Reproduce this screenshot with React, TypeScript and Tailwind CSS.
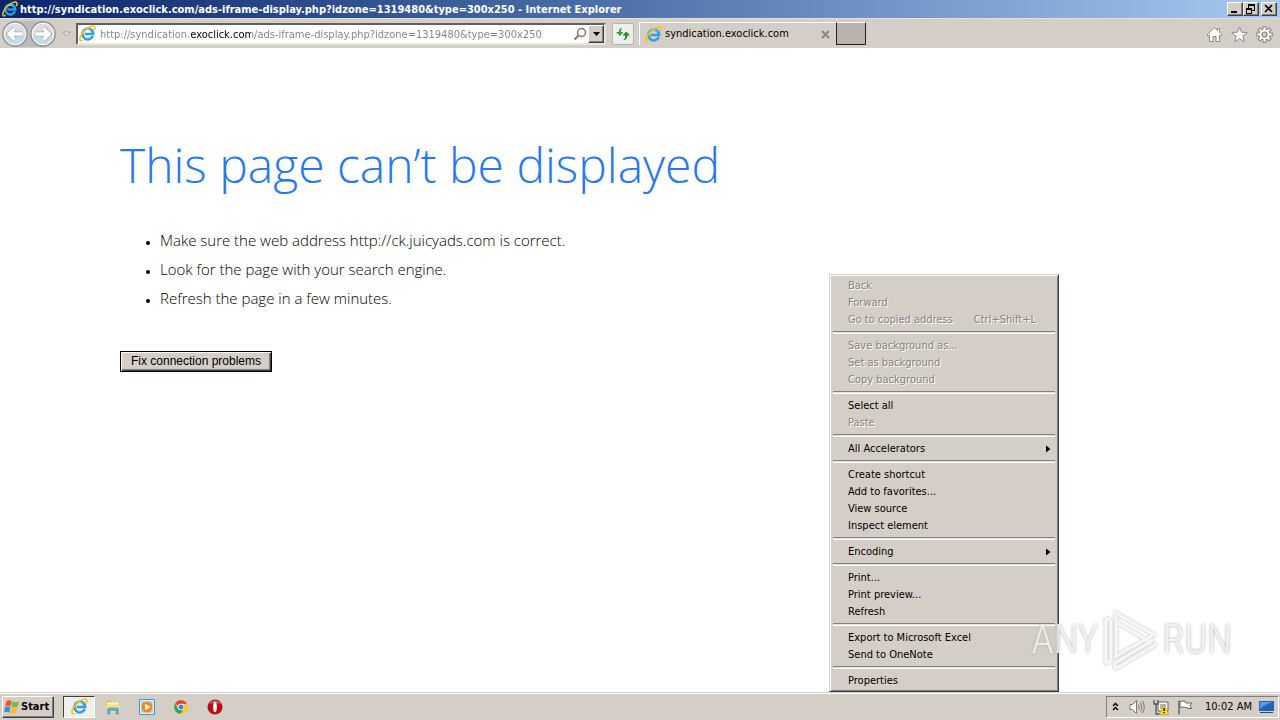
import type { ReactNode } from "react";
import clsx from "clsx";

type MenuEntry = { label: string; shortcut?: string; disabled?: boolean; submenu?: boolean };

const MENU: MenuEntry[][] = [
  [
    { label: "Back", disabled: true },
    { label: "Forward", disabled: true },
    { label: "Go to copied address", shortcut: "Ctrl+Shift+L", disabled: true },
  ],
  [
    { label: "Save background as...", disabled: true },
    { label: "Set as background", disabled: true },
    { label: "Copy background", disabled: true },
  ],
  [{ label: "Select all" }, { label: "Paste", disabled: true }],
  [{ label: "All Accelerators", submenu: true }],
  [
    { label: "Create shortcut" },
    { label: "Add to favorites..." },
    { label: "View source" },
    { label: "Inspect element" },
  ],
  [{ label: "Encoding", submenu: true }],
  [{ label: "Print..." }, { label: "Print preview..." }, { label: "Refresh" }],
  [{ label: "Export to Microsoft Excel" }, { label: "Send to OneNote" }],
  [{ label: "Properties" }],
];

const TIPS = [
  "Make sure the web address http://ck.juicyads.com is correct.",
  "Look for the page with your search engine.",
  "Refresh the page in a few minutes.",
];

const raised =
  "border border-t-white border-l-white border-r-[#404040] border-b-[#404040] shadow-[inset_-1px_-1px_0_#808080]";

function IeLogo({ className }: { className?: string }) {
  return (
    <svg viewBox="0 0 18 18" className={className} aria-hidden="true">
      <path d="M14.6 11.7A5.7 5.7 0 1 1 15 9.6H6" fill="none" stroke="#2b9fe0" strokeWidth="2.7" />
      <path d="M4.6 7.2A5.6 5.6 0 0 1 13 6" fill="none" stroke="#8bd6fa" strokeWidth="1" />
      <path
        d="M3.4 16.4C.5 17.5 0 14.6 2.4 10.6 5.4 5.4 11.8.6 15.4 1.1c1.9.3 1.7 2.3.9 4.2"
        fill="none"
        stroke="#f2c21c"
        strokeWidth="1.7"
        strokeLinecap="round"
      />
    </svg>
  );
}

function NavArrow({ back }: { back?: boolean }) {
  const arrow = back ? "M20 13H7M12.5 7.5 7 13l5.5 5.5" : "M6 13h13M13.5 7.5 19 13l-5.5 5.5";
  return (
    <svg viewBox="0 0 26 26" className="size-[26px]" aria-hidden="true">
      <circle cx="13" cy="13" r="12" fill="#dcdee1" stroke="#8e9296" strokeWidth="1.4" />
      <path d="M2 13a11 11 0 0 0 22 0c-6 3-16 3-22 0Z" fill="#c3dce8" />
      <circle cx="13" cy="13" r="10.8" fill="none" stroke="#fff" strokeWidth="1" />
      <path d={arrow} fill="none" stroke="#a3a9ad" strokeWidth="5" />
      <path d={arrow} fill="none" stroke="#fff" strokeWidth="3.4" />
    </svg>
  );
}

function WindowButton({ label, children }: { label: string; children: ReactNode }) {
  return (
    <button aria-label={label} className={clsx("flex h-[14px] w-4 items-center justify-center bg-[#d5cec7]", raised)}>
      <svg viewBox="0 0 12 10" className="h-[10px] w-3" fill="none" stroke="#000" shapeRendering="crispEdges">
        {children}
      </svg>
    </button>
  );
}

function TitleBar() {
  return (
    <header className="flex h-[18px] items-center bg-linear-to-r from-[#0a246a] to-[#a6caf0] pr-[3px] pl-0.5">
      <IeLogo className="size-4" />
      <h1 className="ml-0.5 grow truncate pt-px text-[11px] leading-4 font-bold text-white">
        http://syndication.exoclick.com/ads-iframe-display.php?idzone=1319480&amp;type=300x250 - Internet Explorer
      </h1>
      <WindowButton label="Minimize">
        <path d="M2 8h6" strokeWidth="2" />
      </WindowButton>
      <WindowButton label="Restore">
        <path d="M3 1h7M1 5h6" strokeWidth="2" />
        <path d="M3.5 2v2M9.5 2v5M7 6.5h3M1.5 6v4M6.5 6v4M1 9.5h6" />
      </WindowButton>
      <div className="ml-0.5 flex">
        <WindowButton label="Close">
          <path d="M2 1l7 7M9 1l-7 7" strokeWidth="1.7" shapeRendering="auto" />
        </WindowButton>
      </div>
    </header>
  );
}

function Toolbar() {
  return (
    <div className="flex h-[30px] items-center border-t border-[#e4dfd8] bg-[#d5cec7] pl-[2px] text-[11px]">
      <nav className="flex items-center gap-[2px] rounded-full bg-[#bdbbb9]">
        <button aria-label="Back">
          <NavArrow back />
        </button>
        <button aria-label="Forward">
          <NavArrow />
        </button>
      </nav>
      <button aria-label="Recent pages" className="mx-1 flex w-3 justify-center">
        <svg viewBox="0 0 9 6" className="h-[6px] w-[9px]">
          <path d="M1 1h7L4.5 5Z" fill="#eee" stroke="#a09c98" />
        </svg>
      </button>
      <form
        onSubmit={(e) => e.preventDefault()}
        className="flex h-[22px] w-[530px] items-center border-2 border-t-[#606060] border-r-[#e8e4e0] border-b-[#e8e4e0] border-l-[#606060] bg-white"
      >
        <IeLogo className="ml-px size-[17px] shrink-0" />
        {/* host name is black, the rest of the address is grey */}
        <input
          aria-label="Address"
          defaultValue="http://syndication.exoclick.com/ads-iframe-display.php?idzone=1319480&type=300x250"
          className="ml-1 h-[18px] min-w-0 grow bg-[linear-gradient(90deg,#808080_90px,#000_90px,#000_151px,#808080_151px)] bg-clip-text pt-px text-transparent outline-none"
        />
        <button aria-label="Search" className="mr-px">
          <svg viewBox="0 0 14 14" className="size-[14px]" fill="none" stroke="#77787a">
            <circle cx="8.5" cy="5.5" r="4" strokeWidth="1.5" />
            <path d="M5.5 8.5 1.5 12.5" strokeWidth="2.2" />
          </svg>
        </button>
        <button
          aria-label="Show address bar list"
          className={clsx("flex h-[18px] w-4 items-center justify-center bg-[#d5cec7]", raised)}
        >
          <svg viewBox="0 0 7 4" className="h-1 w-[7px]">
            <path d="M0 0h7L3.5 4Z" />
          </svg>
        </button>
      </form>
      <button
        aria-label="Refresh"
        className="ml-[6px] flex h-[22px] w-[22px] items-center justify-center rounded-[2px] border border-[#b5b3b0] bg-[#eeeeec]"
      >
        <svg viewBox="0 0 16 14" className="h-[14px] w-4">
          <path d="M7 1C4.5 1 4 3 4 5H1l4 4 3.5-4H6c0-2 .2-3 1-4Z" fill="#3c9a45" />
          <path d="M8.5 13c3 0 3.7-2 3.7-4.5H15L11.3 4.5 7.5 8.5h2.7c0 2-.4 3.5-1.7 4.5Z" fill="#26802f" />
        </svg>
      </button>
      <div className="ml-[5px] flex h-[23px] w-[197px] items-center border-t border-l border-white pl-[5px]">
        <IeLogo className="size-[17px]" />
        <button role="tab" aria-selected="true" className="ml-[3px] grow pt-px text-left">
          syndication.exoclick.com
        </button>
        <button aria-label="Close tab" className="mr-1.5">
          <svg viewBox="0 0 9 9" className="size-[9px]">
            <path d="M1 1l7 7M8 1 1 8" stroke="#88847f" strokeWidth="2" />
          </svg>
        </button>
      </div>
      <button
        aria-label="New tab"
        className="h-[23px] w-[30px] border border-t-white border-r-[#202020] border-b-[#202020] border-l-[#202020] bg-[#bab3ad]"
      />
      <div className="ml-auto flex items-center gap-2 pt-0.5 pr-[7px]">
        <button aria-label="Home">
          <svg viewBox="0 0 17 17" className="size-[17px]" fill="#fff" stroke="#8d8b88">
            <path d="M8.5 1.5 1 9l1.3 1.2L3.5 9v6.5h3.5v-5h3v5h3.5V9l1.2 1.2L16 9l-2.5-2.5V2.5h-2V4.5Z" />
          </svg>
        </button>
        <button aria-label="Favorites">
          <svg viewBox="0 0 17 17" className="size-[17px]" fill="#fff" stroke="#8d8b88">
            <path d="m8.5 1 2 5.2 5.8.3-4.5 3.6 1.5 5.7-4.8-3.2-4.8 3.2 1.5-5.7L.7 6.5l5.8-.3Z" />
          </svg>
        </button>
        <button aria-label="Tools">
          <svg viewBox="0 0 17 17" className="size-[17px]">
            <path
              d="M8.5 .2v16.6M.2 8.5h16.6M2.6 2.6l11.8 11.8M14.4 2.6 2.6 14.4"
              stroke="#858381"
              strokeWidth="4"
            />
            <circle cx="8.5" cy="8.5" r="6" fill="#858381" />
            <path
              d="M8.5 1.2v14.6M1.2 8.5h14.6M3.4 3.4l10.2 10.2M13.6 3.4 3.4 13.6"
              stroke="#fff"
              strokeWidth="2"
            />
            <circle cx="8.5" cy="8.5" r="5" fill="#fff" />
            <circle cx="8.5" cy="8.5" r="2.5" fill="#d5cec7" stroke="#858381" strokeWidth="1.2" />
          </svg>
        </button>
      </div>
    </div>
  );
}

function ContextMenu() {
  return (
    <div
      role="menu"
      className="absolute top-[226px] left-[829px] w-[230px] border border-t-[#d5cec7] border-r-[#404040] border-b-[#404040] border-l-[#d5cec7] bg-[#d5cec7] p-0.5 text-[11px] shadow-[inset_1px_1px_0_#fff,inset_-1px_-1px_0_#808080]"
    >
      {MENU.map((group, i) => (
        <div key={i}>
          {i > 0 && <hr className="mx-px my-[3px] h-[3px] border-t border-b border-t-[#808080] border-b-white bg-[#e4e0da]" />}
          {group.map((item) => (
            <button
              key={item.label}
              role="menuitem"
              disabled={item.disabled}
              className={clsx(
                "flex h-[17px] w-full items-center pt-0.5 pr-1 pl-4 text-left",
                item.disabled ? "text-[#85827e] [text-shadow:1px_1px_0_#fff]" : "text-black"
              )}
            >
              <span className="grow">{item.label}</span>
              {item.shortcut && <span className="pr-4">{item.shortcut}</span>}
              {item.submenu && (
                <svg viewBox="0 0 5 8" className="mr-px mb-0.5 h-2 w-[5px]">
                  <path d="M0 .5v7L4.5 4Z" />
                </svg>
              )}
            </button>
          ))}
        </div>
      ))}
    </div>
  );
}

function Watermark() {
  return (
    <div className="pointer-events-none absolute right-[48px] bottom-5 flex items-center font-['Roboto_Condensed','DejaVu_Sans_Condensed',sans-serif] text-[40px] leading-[64px] font-light text-white/75 [text-shadow:0_0_3px_#aaa]">
      <span>ANY</span>
      <svg
        viewBox="0 0 60 64"
        className="mx-0.5 h-16 w-[60px] drop-shadow-[0_0_1px_#aaa]"
        fill="none"
        stroke="#fff"
        strokeWidth="3.5"
        strokeOpacity=".85"
      >
        <path d="M10 11H5v44l5-2V12M15 48V5l40 23M15 14l36 21M15 14v34l36-20M14 61l42-25M14 55l38-23M14 61v-8" />
      </svg>
      <span>RUN</span>
    </div>
  );
}

function Taskbar() {
  return (
    <footer className="flex h-7 items-center border-t border-[#d5cec7] bg-[#d5cec7] pl-0.5 text-[11px] shadow-[inset_0_1px_0_#fff]">
      <button
        className={clsx("flex h-[22px] w-[52px] items-center gap-px bg-[#d5cec7] pl-px text-[11px] font-bold", raised)}
      >
        <svg viewBox="0 0 16 16" className="size-4 shrink-0" aria-hidden="true">
          <path d="M2.5 2C4 1 6 1 7.8 2L6.6 7.3C5 6.4 3 6.4 1.3 7.3Z" fill="#e95b26" />
          <path d="M8.7 2.5C10.7 3.5 12.7 3.4 15 2.3L13.7 7.5C11.7 8.6 9.4 8.6 7.4 7.7Z" fill="#79b943" />
          <path d="M1.1 8.2C3 7.3 4.7 7.3 6.4 8.3L5.2 13.5C3.5 12.6 1.8 12.6 0 13.5Z" fill="#3390d6" />
          <path d="M7.2 8.7C9.2 9.7 11.2 9.6 13.4 8.5L12.1 13.7C10 14.8 7.9 14.8 6 13.8Z" fill="#f7bd28" />
        </svg>
        <span className="pt-px">Start</span>
      </button>
      <button
        aria-label="Internet Explorer"
        className="ml-[9px] flex h-[22px] w-8 items-center justify-center border border-t-[#404040] border-r-white border-b-white border-l-[#404040] bg-[#f1efec]"
      >
        <IeLogo className="size-[17px]" />
      </button>
      <div className="ml-[10px] flex items-center gap-[18px]">
        <button aria-label="Windows Explorer">
          <svg viewBox="0 0 16 16" className="size-4">
            <path d="M1 1.5h5l1 1.5h8v10H1Z" fill="#e4bd54" />
            <path d="M2 3.5h12v3H2Z" fill="#faf5d5" />
            <path d="M1 5.5h14v8H1Z" fill="#f5dc86" />
            <path
              d="M2.5 15v-4.5q0-1.5 1.5-1.5h8q1.5 0 1.5 1.5V15H11v-3.5H5V15Z"
              fill="#58b5df"
              stroke="#368eb9"
              strokeWidth=".5"
            />
          </svg>
        </button>
        <button aria-label="Windows Media Player">
          <svg viewBox="0 0 16 16" className="size-4">
            <path d="M.5.5h15v15H.5Z" fill="#d9ecf9" stroke="#4a95cc" />
            <path d="M2.5 2.5h11v11h-11Z" fill="#9bcdf0" />
            <circle cx="8" cy="8" r="5.5" fill="#f28b16" />
            <path d="M6.2 4.8v6.4L11.3 8Z" fill="#fff" />
          </svg>
        </button>
        <button aria-label="Google Chrome">
          <svg viewBox="0 0 16 16" className="size-4">
            <circle cx="8" cy="8" r="6.8" fill="#f9cb20" />
            <path d="M8 8 2.1 4.6A6.8 6.8 0 0 1 14 4.8H8Z" fill="#e24232" />
            <path d="M2.1 4.6A6.8 6.8 0 0 0 7.5 14.8L10.8 9.6 8 8 5.2 9.6Z" fill="#35a353" />
            <circle cx="8" cy="8" r="3.3" fill="#fff" />
            <circle cx="8" cy="8" r="2.5" fill="#437fe8" />
          </svg>
        </button>
        <button aria-label="Opera">
          <svg viewBox="0 0 16 16" className="size-4">
            <circle cx="8" cy="8" r="7.5" fill="#b51218" />
            <path d="M2 5a7 7 0 0 1 12 0Q8 3 2 5Z" fill="#d9595a" />
            <ellipse cx="8" cy="8" rx="1.8" ry="5.2" fill="#fff" />
          </svg>
        </button>
      </div>
      <div className="mr-px ml-auto flex h-[22px] items-center border border-t-[#808080] border-r-white border-b-white border-l-[#808080] pr-[3px] pl-[5px]">
        <button aria-label="Show hidden icons">
          <svg viewBox="0 0 7 9" className="h-[9px] w-[7px]" fill="none" stroke="#000" strokeWidth="1.5">
            <path d="M1 4l2.5-2.5L6 4M1 8l2.5-2.5L6 8" />
          </svg>
        </button>
        <button aria-label="Volume" className="ml-[10px]">
          <svg viewBox="0 0 16 16" className="size-4" fill="none" stroke="#77777a">
            <path d="M1 5.5h2.5L7.5 1.5v13L3.5 10.5H1Z" fill="#fff" />
            <path d="M9.5 5.5q1.5 2.5 0 5M11.5 3.5q3 4.5 0 9M13.5 2q3.5 6 0 12" />
          </svg>
        </button>
        <button aria-label="Network" className="ml-2">
          <svg viewBox="0 0 16 16" className="size-4">
            <path d="M5 3h10v9H5Z" fill="#f8f8f8" stroke="#666" />
            <path d="M7 5h6v5H7Z" fill="#b7b5b2" />
            <path d="M1 1v4h4V1M3 5v10h5" fill="none" stroke="#555" strokeWidth="1.3" />
            <path d="m11 6 5 9.5H6Z" fill="#ffdc18" stroke="#b69a12" strokeWidth=".6" />
            <path d="M11 9v3M11 13v1.3" stroke="#000" strokeWidth="1.3" />
          </svg>
        </button>
        <button aria-label="Action Center" className="ml-2">
          <svg viewBox="0 0 16 16" className="size-4" fill="#fff" stroke="#666">
            <path d="M2 1.5v14" strokeWidth="1.5" />
            <path d="M3 2.5q3-1 6 0v1.5h6l-2 3 2 2.5q-3 .5-6-1-3-1-6 0Z" />
          </svg>
        </button>
        <time className="ml-3 pt-px">10:02 AM</time>
        <button aria-label="Show desktop" className="ml-[7px]">
          <svg viewBox="0 0 16 14" className="h-[14px] w-4">
            <path d="M0 1h15v10H0Z" fill="#2464b4" />
            <path d="M1 2h13Q6 4 1 9Z" fill="#5c9be0" />
            <path d="M1 12.5h13" stroke="#234b7d" />
          </svg>
        </button>
      </div>
    </footer>
  );
}

export default function App() {
  return (
    <div className="flex min-h-screen flex-col bg-white font-['Tahoma','DejaVu_Sans_Condensed','DejaVu_Sans',sans-serif] text-black">
      <TitleBar />
      <Toolbar />
      <main className="relative grow px-[120px] pt-[82px]">
        <h2 className="font-['Open_Sans',sans-serif] text-[48px] leading-[70px] font-light text-[#2778ec]">
          This page can’t be displayed
        </h2>
        <ul className="mt-[26px] list-disc pl-10 font-['Open_Sans',sans-serif] text-[15px] leading-[29px] font-light marker:text-[10px]">
          {TIPS.map((tip) => (
            <li key={tip}>{tip}</li>
          ))}
        </ul>
        <button className="mt-[38px] h-[21px] w-[152px] border border-black bg-[#d5cec7] pb-px font-['Liberation_Sans',sans-serif] text-[12px] shadow-[inset_1px_1px_0_#fff,inset_-1px_-1px_0_#404040,inset_-2px_-2px_0_#808080]">
          Fix connection problems
        </button>
        <ContextMenu />
        <Watermark />
      </main>
      <Taskbar />
    </div>
  );
}
